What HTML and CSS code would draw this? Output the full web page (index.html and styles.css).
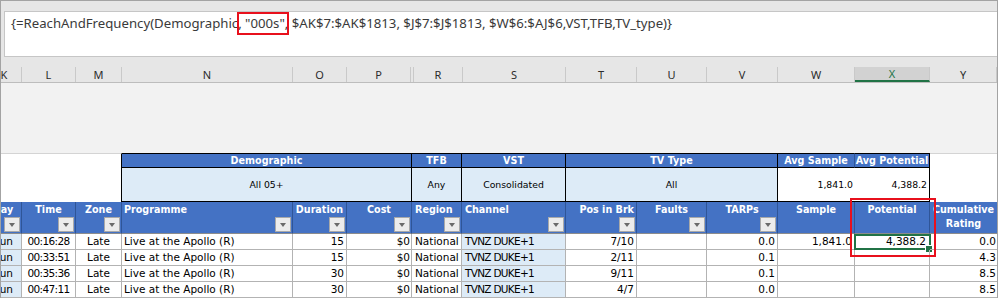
FILE: index.html
```html
<!DOCTYPE html>
<html>
<head>
<meta charset="utf-8">
<link rel="stylesheet" href="styles.css">
</head>
<body>
<div class="frame">
  <div class="ftop">
    <div class="fbar">{=ReachAndFrequency(Demographic<span class="hl">, "000s"</span>, $AK$7:$AK$1813, $J$7:$J$1813, $W$6:$AJ$6,VST,TFB,TV_type)}</div>
  </div>
  <div class="colhdr">
    <div class="lh clip"><span class="kin">K</span></div>
    <div class="lh">L</div>
    <div class="lh">M</div>
    <div class="lh">N</div>
    <div class="lh">O</div>
    <div class="lh">P</div>
    <div class="lh"></div>
    <div class="lh">R</div>
    <div class="lh">S</div>
    <div class="lh">T</div>
    <div class="lh">U</div>
    <div class="lh">V</div>
    <div class="lh">W</div>
    <div class="lh lsel">X</div>
    <div class="lh">Y</div>
  </div>
  <div class="gap"></div>
  <div class="sheet">
    <div class="blank-l"></div>
    <div class="g g-demo">Demographic</div>
    <div class="g">TFB</div>
    <div class="g">VST</div>
    <div class="g g-tv">TV Type</div>
    <div class="g g-avs">Avg Sample</div>
    <div class="g">Avg Potential</div>
    <div class="blank-r"></div>

    <div class="v v-demo">All 05+</div>
    <div class="v">Any</div>
    <div class="v">Consolidated</div>
    <div class="v v-tv">All</div>
    <div class="v vw v-avs">1,841.0</div>
    <div class="v vw v-avp">4,388.2</div>

    <div class="h day"><div class="din">Day</div><span class="fb"></span></div>
    <div class="h hc">Time<span class="fb"></span></div>
    <div class="h hc">Zone<span class="fb"></span></div>
    <div class="h hl2">Programme<span class="fb"></span></div>
    <div class="h hc">Duration<span class="fb"></span></div>
    <div class="h hc">Cost<span class="fb"></span></div>
    <div class="h hl3">Region<span class="fb"></span></div>
    <div class="h hl3">Channel<span class="fb"></span></div>
    <div class="h hr">Pos in Brk<span class="fb"></span></div>
    <div class="h hc">Faults<span class="fb"></span></div>
    <div class="h hc">TARPs<span class="fb"></span></div>
    <div class="h hc">Sample</div>
    <div class="h hc">Potential</div>
    <div class="h hc hcum">Cumulative Rating</div>

    <div class="c day"><div class="din">Sun</div></div>
    <div class="c ctr tm">00:16:28</div>
    <div class="c ctr">Late</div>
    <div class="c lft">Live at the Apollo (R)</div>
    <div class="c rgt">15</div>
    <div class="c rgt r1">$0</div>
    <div class="c lft3">National</div>
    <div class="c lft3 chn">TVNZ DUKE+1</div>
    <div class="c rgt">7/10</div>
    <div class="c"></div>
    <div class="c rgt">0.0</div>
    <div class="c rgt">1,841.0</div>
    <div class="c rgt r3 sel">4,388.2</div>
    <div class="c rgt r1">0.0</div>

    <div class="c day"><div class="din">Sun</div></div>
    <div class="c ctr tm">00:33:51</div>
    <div class="c ctr">Late</div>
    <div class="c lft">Live at the Apollo (R)</div>
    <div class="c rgt">15</div>
    <div class="c rgt r1">$0</div>
    <div class="c lft3">National</div>
    <div class="c lft3 chn">TVNZ DUKE+1</div>
    <div class="c rgt">2/11</div>
    <div class="c"></div>
    <div class="c rgt">0.1</div>
    <div class="c rgt"></div>
    <div class="c rgt r3"></div>
    <div class="c rgt r1">4.3</div>

    <div class="c day"><div class="din">Sun</div></div>
    <div class="c ctr tm">00:35:36</div>
    <div class="c ctr">Late</div>
    <div class="c lft">Live at the Apollo (R)</div>
    <div class="c rgt">30</div>
    <div class="c rgt r1">$0</div>
    <div class="c lft3">National</div>
    <div class="c lft3 chn">TVNZ DUKE+1</div>
    <div class="c rgt">9/11</div>
    <div class="c"></div>
    <div class="c rgt">0.1</div>
    <div class="c rgt"></div>
    <div class="c rgt r3"></div>
    <div class="c rgt r1">8.5</div>

    <div class="c day"><div class="din">Sun</div></div>
    <div class="c ctr tm">00:47:11</div>
    <div class="c ctr">Late</div>
    <div class="c lft">Live at the Apollo (R)</div>
    <div class="c rgt">30</div>
    <div class="c rgt r1">$0</div>
    <div class="c lft3">National</div>
    <div class="c lft3 chn">TVNZ DUKE+1</div>
    <div class="c rgt">4/7</div>
    <div class="c"></div>
    <div class="c rgt">0.0</div>
    <div class="c rgt"></div>
    <div class="c rgt r3"></div>
    <div class="c rgt r1">8.5</div>

    <div class="redbox"></div>
  </div>
</div>
</body>
</html>
```

FILE: styles.css
```css
* { box-sizing: border-box; margin: 0; padding: 0; }
html, body { margin: 0; background: #ffffff; }
body { width: 999px; height: 298px; overflow: hidden; font-family: "DejaVu Sans", Verdana, sans-serif; }

.frame {
  width: 998px;
  height: 298px;
  border: 1px solid #a3a3a3;
  border-bottom: none;
  background: #e6e6e6;
  display: flex;
  flex-direction: column;
  overflow: hidden;
}

/* formula bar */
.ftop { height: 66px; padding: 10px 0 10px 3px; flex: none; }
.fbar {
  height: 46px;
  background: #ffffff;
  border: 1px solid #c6c6c6;
  border-right: none;
  padding: 2px 0 0 6px;
  font-family: "Noto Sans", "Open Sans", sans-serif;
  font-size: 13.2px;
  line-height: 18px;
  color: #3a3a3a;
  white-space: nowrap;
}
.hl { position: relative; }
.hl::after {
  content: "";
  position: absolute;
  left: -1px;
  right: -4px;
  top: -2px;
  bottom: -3px;
  border: 2px solid #e8101c;
}

/* column letters */
.colhdr {
  height: 16px;
  flex: none;
  display: grid;
  grid-template-columns: 21px 54px 46px 171px 54px 64px 3px 49px 103px 71px 70px 71px 77px 75px 67px;
  border-bottom: 1px solid #bdbdbd;
  font-family: "Noto Sans", sans-serif;
  font-size: 11px;
  color: #2b2b2b;
}
.lh {
  border-right: 1px solid #c9c9c9;
  text-align: center;
  line-height: 15px;
  overflow: hidden;
  white-space: nowrap;
}
.lh.clip { text-align: left; }
.kin { display: inline-block; width: 40px; margin-left: -17px; text-align: center; }
.lsel { background: #d2d2d2; color: #217346; border-bottom: 2px solid #217346; line-height: 13px; }

.gap { height: 70px; flex: none; background: #f2f2f2; }

/* sheet */
.sheet {
  position: relative;
  flex: none;
  height: 145px;
  background: #ffffff;
  display: grid;
  grid-template-columns: 21px 54px 46px 171px 54px 65px 50px 104px 71px 70px 71px 77px 75px 67px;
  grid-template-rows: 15px 34px 32px 16px 16px 16px 16px;
}

.blank-l { grid-column: 1 / 4; grid-row: 1 / 3; background: #ffffff; border-top: 1px solid #d4d4d4; border-right: 1px solid #000; }
.blank-r { grid-column: 14; grid-row: 1 / 3; background: #ffffff; border-top: 1px solid #d4d4d4; }

.g {
  background: #4472c4;
  color: #ffffff;
  font-weight: bold;
  font-size: 9.6px;
  line-height: 13px;
  text-align: center;
  border-top: 1px solid #000;
  border-right: 1px solid #000;
  border-bottom: 1px solid #000;
  white-space: nowrap;
}
.g-demo { grid-column: 4 / 7; }
.g-tv { grid-column: 9 / 12; }
.g-avs { border-right-color: #2f5597; }

.v {
  background: #ddebf7;
  color: #000;
  font-size: 9.3px;
  line-height: 33px;
  text-align: center;
  border-right: 1px solid #000;
  border-bottom: 1px solid #000;
  white-space: nowrap;
}
.v-demo { grid-column: 4 / 7; }
.v-tv { grid-column: 9 / 12; }
.vw { background: #ffffff; text-align: right; padding-right: 2px; }
.v-avs { border-right: none; }

/* table header */
.h {
  position: relative;
  background: #4472c4;
  color: #ffffff;
  font-weight: bold;
  font-size: 9.6px;
  line-height: 13.5px;
  padding-top: 1px;
  border-right: 1px solid #2f5597;
  border-bottom: 1px solid #8c8c8c;
  white-space: nowrap;
}
.hc { text-align: center; }
.hl2 { text-align: left; padding-left: 2px; }
.hl3 { text-align: left; padding-left: 3px; }
.hr { text-align: right; padding-right: 2px; }
.hcum { white-space: normal; border-right: none; line-height: 13.5px; }
.h.day { overflow: hidden; padding-top: 1px; }

.fb {
  position: absolute;
  right: 1px;
  bottom: 1px;
  width: 16px;
  height: 15px;
  background: #ececec;
  border: 1px solid #a9a9a9;
}
.fb::after {
  content: "";
  position: absolute;
  left: 4px;
  top: 5px;
  border-left: 3.5px solid transparent;
  border-right: 3.5px solid transparent;
  border-top: 4px solid #6a6a6a;
}

/* data cells */
.c {
  position: relative;
  font-size: 10.5px;
  line-height: 15px;
  color: #000;
  border-right: 1px solid #b3b3b3;
  border-bottom: 1px solid #b3b3b3;
  white-space: nowrap;
}
.day { background: #ddebf7; overflow: hidden; }
.c.day { padding: 0; }
.h.day { background: #4472c4; }
.din { width: 38px; margin-left: -17px; text-align: center; }
.ctr { text-align: center; }
.tm { letter-spacing: -0.65px; }
.lft { text-align: left; padding-left: 2px; }
.lft3 { text-align: left; padding-left: 3px; overflow: hidden; }
.chn { background: #ddebf7; letter-spacing: -0.7px; }
.rgt { text-align: right; padding-right: 2px; }
.r1 { padding-right: 1px; }
.r3 { padding-right: 3px; }
.c:nth-child(14n) { border-right: none; }

.sel::before {
  content: "";
  position: absolute;
  left: -1px;
  right: -2px;
  top: 0;
  bottom: -1px;
  border: 2px solid #217346;
}
.sel::after {
  content: "";
  position: absolute;
  right: -4px;
  bottom: -4px;
  width: 6px;
  height: 6px;
  background: #217346;
  border: 1px solid #ffffff;
}

.redbox {
  position: absolute;
  left: 849px;
  top: 45px;
  width: 86px;
  height: 59px;
  border: 2px solid #e8101c;
  pointer-events: none;
}
```
